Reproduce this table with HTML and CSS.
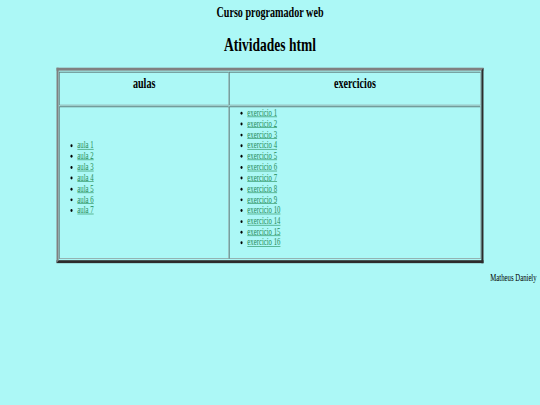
FILE: index.html
```html
<!DOCTYPE html>
<html lang="pt">
<head>
<meta charset="utf-8">
<title>Atividades html</title>
<link rel="stylesheet" href="styles.css">
</head>
<body>
<div class="page">
  <h2 class="course">Curso programador web</h2>
  <h1 class="title">Atividades html</h1>
  <table class="grid">
    <tr>
      <th><h2 class="col-title">aulas</h2></th>
      <th><h2 class="col-title">exercicios</h2></th>
    </tr>
    <tr>
      <td class="aulas">
        <ul>
          <li><a href="#">aula 1</a></li>
          <li><a href="#">aula 2</a></li>
          <li><a href="#">aula 3</a></li>
          <li><a href="#">aula 4</a></li>
          <li><a href="#">aula 5</a></li>
          <li><a href="#">aula 6</a></li>
          <li><a href="#">aula 7</a></li>
        </ul>
      </td>
      <td class="exercicios">
        <ul>
          <li><a href="#">exercicio 1</a></li>
          <li><a href="#">exercicio 2</a></li>
          <li><a href="#">exercicio 3</a></li>
          <li><a href="#">exercicio 4</a></li>
          <li><a href="#">exercicio 5</a></li>
          <li><a href="#">exercicio 6</a></li>
          <li><a href="#">exercicio 7</a></li>
          <li><a href="#">exercicio 8</a></li>
          <li><a href="#">exercicio 9</a></li>
          <li><a href="#">exercicio 10</a></li>
          <li><a href="#">exercicio 14</a></li>
          <li><a href="#">exercicio 15</a></li>
          <li><a href="#">exercicio 16</a></li>
        </ul>
      </td>
    </tr>
  </table>
  <p class="author">Matheus Daniely</p>
</div>
</body>
</html>
```
FILE: styles.css
```css
html {
  background: #acf8f6;
  overflow: hidden;
}
body {
  margin: 0;
  overflow: hidden;
  font-family: "Liberation Serif", "Times New Roman", serif;
  font-size: 16px;
  line-height: 1.15;
  color: #000;
}
.page {
  box-sizing: border-box;
  width: 1280px;
  padding: 8px;
  transform: scale(0.421875, 0.5887);
  transform-origin: 0 0;
}
.course {
  text-align: center;
  font-size: 24px;
  margin: 0 0 19.92px;
}
.title {
  text-align: center;
  font-size: 32px;
  margin: 21.44px 0;
}
.grid {
  width: 80%;
  margin: 0 auto;
  border: 5px outset gray;
  border-spacing: 2px;
}
.grid th,
.grid td {
  border: 1px inset gray;
  padding: 1px;
}
.grid th {
  vertical-align: top;
  padding-top: 6px;
}
.grid td {
  vertical-align: middle;
}
.col-title {
  font-size: 24px;
  margin: 0 0 19.92px;
}
.grid ul {
  padding-left: 40px;
  margin: 0 0 16px;
}
.grid a {
  color: #1f8a55;
}
.author {
  text-align: right;
  margin: 16px 0;
}
```
